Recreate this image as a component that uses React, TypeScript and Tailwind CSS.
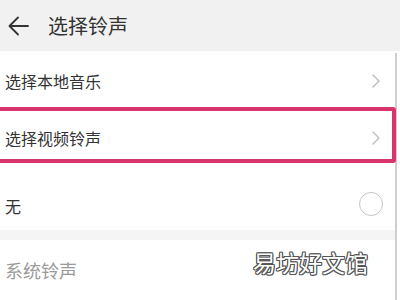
import React from 'react';

const font = "font-['Noto_Sans_CJK_SC','Noto_Sans',sans-serif]";

function Chevron() {
    return (
        <svg width="10" height="16" viewBox="0 0 10 16" fill="none" className="mr-[14px]">
            <path d="M2 2l6 6-6 6" stroke="#bdbdbd" strokeWidth="1.4" strokeLinecap="round" strokeLinejoin="round" />
        </svg>
    );
}

export default function App() {
    return (
        <div className={`relative w-[400px] h-[300px] overflow-hidden bg-white ${font}`}>
            {/* header */}
            <div className="h-[51px] bg-[#f1f1f1] flex items-center pl-[8px] gap-[19px]">
                <svg width="21" height="20" viewBox="0 0 21 20" fill="none">
                    <path d="M20 10H2M10 1.5L1.5 10 10 18.5" stroke="#333" strokeWidth="1.8" strokeLinecap="round" strokeLinejoin="round" />
                </svg>
                <span className="text-[20px] text-[#333] leading-none mt-[1px]">选择铃声</span>
            </div>

            <div className="w-[397px] border-r-2 border-[#cfcfcf] mt-[2px]">
                <div className="h-[56px] flex items-center justify-between pl-[5px]">
                    <span className="text-[16px] text-[#333]">选择本地音乐</span>
                    <Chevron />
                </div>
                <div className="h-[55px] flex items-center justify-between pl-[5px] pt-[2px]">
                    <span className="text-[16px] text-[#333]">选择视频铃声</span>
                    <Chevron />
                </div>
                <div className="h-[66px] flex items-center justify-between pl-[5px] pt-[14px]">
                    <span className="text-[16px] text-[#333] mt-[4px]">无</span>
                    <div className="w-[24px] h-[24px] rounded-full border-[1.5px] border-[#c4c4c4] mr-[12px]" />
                </div>
                <div className="h-[10px] bg-[#f5f5f5]" />
                <div className="h-[70px] flex items-start pl-[5px] pt-[17px]">
                    <span className="text-[18px] leading-[27px] text-[#9a9a9a]">系统铃声</span>
                </div>
            </div>

            {/* highlight box */}
            <div className="absolute left-[-6px] top-[107px] w-[402px] h-[56px] border-[4px] border-[#d8356f] rounded-[3px]" />

            {/* watermark */}
            <div className="absolute left-[253px] top-[251px] text-[23px] leading-none text-white [text-shadow:1px_0_#555,-1px_0_#555,0_1px_#555,0_-1px_#555,1px_1px_#555,-1px_-1px_#555,1px_-1px_#555,-1px_1px_#555]">
                易坊好文馆
            </div>
        </div>
    );
}
